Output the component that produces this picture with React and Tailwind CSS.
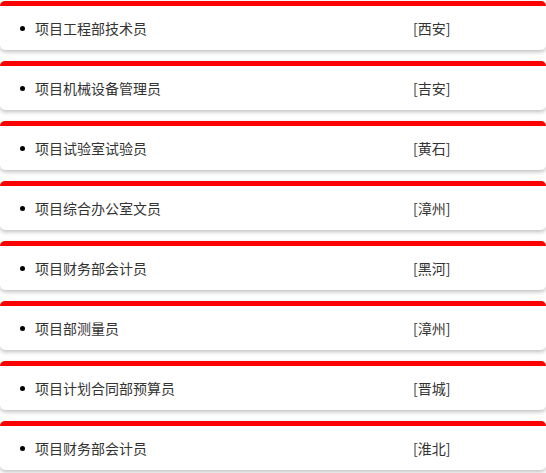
const items = [
  ["项目工程部技术员", "[西安]"],
  ["项目机械设备管理员", "[吉安]"],
  ["项目试验室试验员", "[黄石]"],
  ["项目综合办公室文员", "[漳州]"],
  ["项目财务部会计员", "[黑河]"],
  ["项目部测量员", "[漳州]"],
  ["项目计划合同部预算员", "[晋城]"],
  ["项目财务部会计员", "[淮北]"],
];

export default function App() {
  return (
    <div className="w-[546px] h-[473px] overflow-hidden bg-white pt-px" style={{ fontFamily: '"Noto Sans CJK SC", "Noto Sans", sans-serif' }}>
      {items.map(([t, c], i) => (
        <div
          key={i}
          className="mb-[11px] h-[49px] rounded-[5px] border-t-[5px] border-[#ff0000] bg-white shadow-[0_2px_4px_rgba(0,0,0,0.25)] flex items-center text-[14px] text-[#333]"
        >
          <span className="ml-[20px] w-[5px] h-[5px] rounded-full bg-black"></span>
          <span className="ml-[10px] flex-1 leading-none">{t}</span>
          <span className="w-[133px] leading-none">{c}</span>
        </div>
      ))}
    </div>
  );
}
